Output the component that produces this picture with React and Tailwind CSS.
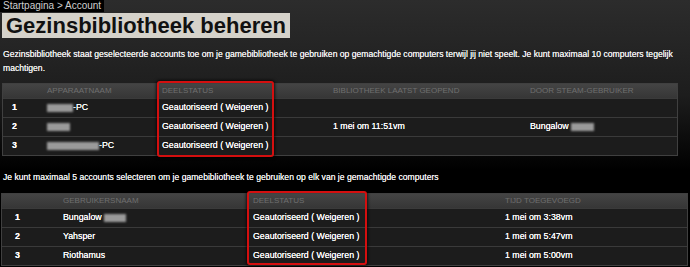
import React from 'react';

const devices = [
  { n: 1, blur: 'w-[26px]', suffix: '-PC', opened: '', by: null },
  { n: 2, blur: 'w-[23px]', suffix: '', opened: '1 mei om 11:51vm', by: 'Bungalow' },
  { n: 3, blur: 'w-[52px]', suffix: '-PC', opened: '', by: null },
];

const users = [
  { n: 1, name: 'Bungalow', blur: true, added: '1 mei om 3:38vm' },
  { n: 2, name: 'Yahsper', blur: false, added: '1 mei om 5:47vm' },
  { n: 3, name: 'Riothamus', blur: false, added: '1 mei om 5:00vm' },
];

function Blur({ className }) {
  return <span className={`inline-block h-[8px] bg-[#9a9a9a] blur-[1px] align-middle ${className}`} />;
}

function Status() {
  return <span>Geautoriseerd ( Weigeren )</span>;
}

export default function App() {
  return (
    <div className="relative h-[267px] w-[690px] overflow-hidden bg-[linear-gradient(to_bottom,#2c2c2c_0px,#1d1d1d_95px,#000_170px)] font-['Liberation_Sans',Arial,sans-serif]">
      {/* breadcrumb + title */}
      <div className="w-fit bg-black px-[3px] text-[10px] leading-[12px] text-[#cfcfcf]">
        Startpagina &gt; Account
      </div>
      <div className="ml-[2px] mt-px w-fit bg-[#d5d2ca] px-[4px] text-[22px] font-bold leading-[25px] text-[#111]">
        Gezinsbibliotheek beheren
      </div>

      <p className="mt-[9px] w-[690px] pl-[3px] pr-[4px] text-[8.6px] leading-[14px] text-[#ececec] [text-shadow:0_0_0.3px_#fff]">
        Gezinsbibliotheek staat geselecteerde accounts toe om je gamebibliotheek te gebruiken op gemachtigde computers terwijl jij niet speelt. Je kunt maximaal 10 computers tegelijk machtigen.
      </p>

      {/* devices table */}
      <div className="relative ml-[2px] mt-[8px] w-[676px]">
        <div className="border border-[#404040]">
          <div className="grid h-[14px] grid-cols-[39px_115px_171px_197px_1fr] items-center bg-[linear-gradient(to_bottom,#444,#363636)] text-[8px] uppercase text-[#6f6f6f]">
            <div />
            <div className="pl-[5px]">Apparaatnaam</div>
            <div className="pl-[5px]">Deelstatus</div>
            <div className="pl-[5px]">Bibliotheek laatst geopend</div>
            <div className="pl-[5px]">Door Steam-gebruiker</div>
          </div>
          {devices.map((d) => (
            <div
              key={d.n}
              className="grid h-[19px] grid-cols-[39px_115px_171px_197px_1fr] items-center border-t border-[#3a3a3a] bg-[#1c1c1c] text-[8.8px] text-white [text-shadow:0_0_0.3px_#fff]"
            >
              <div className="pl-[9px] font-bold">{d.n}</div>
              <div className="pl-[5px]">
                <Blur className={d.blur} />
                {d.suffix}
              </div>
              <div className="pl-[5px]">
                <Status />
              </div>
              <div className="pl-[5px]">{d.opened}</div>
              <div className="pl-[5px]">
                {d.by && (
                  <>
                    {d.by} <Blur className="w-[23px]" />
                  </>
                )}
              </div>
            </div>
          ))}
        </div>
        <div className="absolute left-[155px] top-[-2px] h-[76px] w-[117px] rounded-[3px] border-2 border-[#d40f0f] shadow-[0_0_3px_1px_rgba(0,0,0,0.7)]" />
      </div>

      <p className="mt-[14px] pl-[3px] text-[8.6px] leading-[14px] text-[#ececec] [text-shadow:0_0_0.3px_#fff]">
        Je kunt maximaal 5 accounts selecteren om je gamebibliotheek te gebruiken op elk van je gemachtigde computers
      </p>

      {/* users table */}
      <div className="relative ml-px mt-[9px] w-[687px]">
        <div className="border border-[#404040]">
          <div className="grid h-[14px] grid-cols-[56px_190px_252px_1fr] items-center bg-[linear-gradient(to_bottom,#444,#363636)] text-[8px] uppercase text-[#6f6f6f]">
            <div />
            <div className="pl-[5px]">Gebruikersnaam</div>
            <div className="pl-[5px]">Deelstatus</div>
            <div className="pl-[5px]">Tijd toegevoegd</div>
          </div>
          {users.map((u) => (
            <div
              key={u.n}
              className="grid h-[19px] grid-cols-[56px_190px_252px_1fr] items-center border-t border-[#3a3a3a] bg-[#1c1c1c] text-[8.8px] text-white [text-shadow:0_0_0.3px_#fff]"
            >
              <div className="pl-[13px] font-bold">{u.n}</div>
              <div className="pl-[5px]">
                {u.name} {u.blur && <Blur className="w-[22px]" />}
              </div>
              <div className="pl-[5px]">
                <Status />
              </div>
              <div className="pl-[5px]">{u.added}</div>
            </div>
          ))}
        </div>
        <div className="absolute left-[246px] top-[-2px] h-[74px] w-[120px] rounded-[3px] border-2 border-[#d40f0f] shadow-[0_0_3px_1px_rgba(0,0,0,0.7)]" />
      </div>
    </div>
  );
}
